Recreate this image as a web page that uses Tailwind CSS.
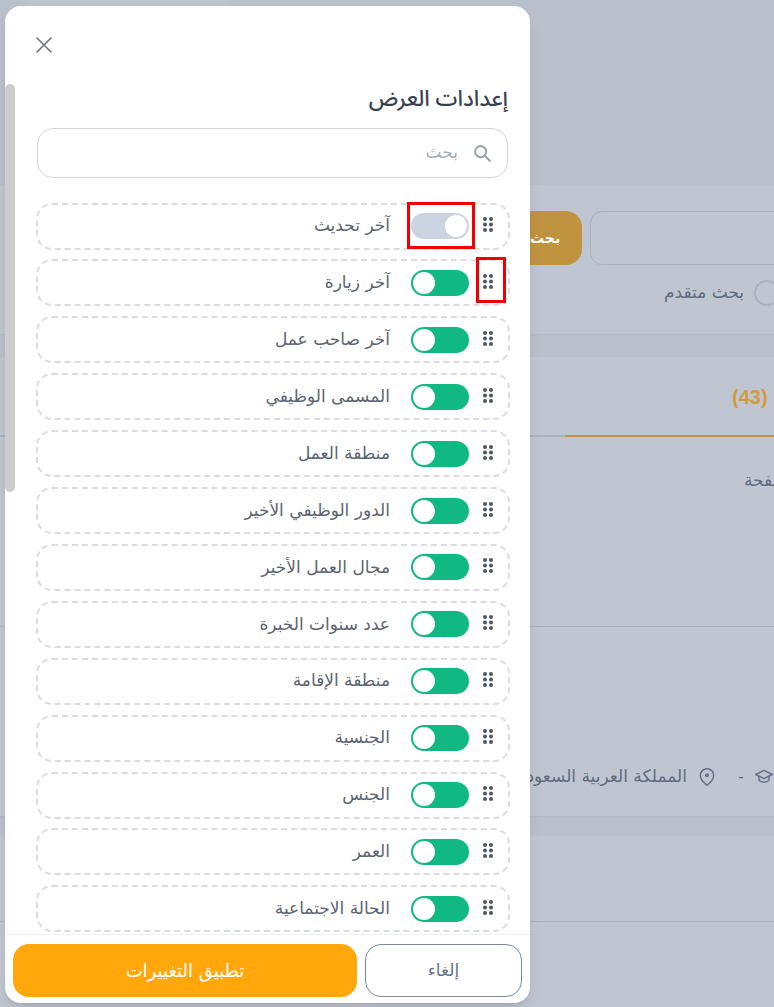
<!DOCTYPE html>
<html lang="ar">
<head>
  <meta charset="UTF-8" />
  <title>إعدادات العرض</title>
  <script src="https://cdn.jsdelivr.net/npm/@tailwindcss/browser@4"></script>
</head>
<body class="relative h-[1007px] w-[774px] overflow-hidden bg-[#b9c0cc] font-['DejaVu_Sans',sans-serif]">

  <!-- Page behind the overlay -->
  <div class="w-[1200px]">
    <div class="ml-[25px] h-[6px] w-[205px] border-l-[60px] border-[#bcc3cf] bg-[#bcc3cf]"></div>
    <section class="mt-[179px] h-[150px] border-b border-[#b3bac8] bg-[#c0c6d1] pt-[26px]">
      <div class="flex gap-2">
        <button class="ml-[482px] h-[54px] w-[100px] rounded-2xl bg-[#c09340] pl-[48px] text-left text-sm font-bold text-white">بحث</button>
        <div class="h-[54px] w-[500px] rounded-xl border border-[#aab1bf]"></div>
      </div>
      <div class="ml-[664px] mt-[15px] flex items-center gap-[10px]">
        <span class="text-[17px] text-[#5f6b80]">بحث متقدم</span>
        <span class="h-[26px] w-[26px] rounded-full border-2 border-[#aab1bf]"></span>
      </div>
    </section>
    <section class="mt-[22px] h-[183px] bg-[#c0c6d1]">
      <div class="h-[80px] border-b-2 border-[#aab1bf]">
        <div class="ml-[565px] h-[80px] w-[600px] border-b-2 border-[#c09340] pl-[167px] pt-[26px] font-['Liberation_Sans'] text-xl font-bold text-[#d09b40]">(43)</div>
      </div>
      <p class="ml-[744px] mt-[31px] text-[17px] text-[#5f6b80]">صفحة</p>
    </section>
    <section class="h-[277px] border-b border-[#b3bac8] bg-[#c0c6d1]">
      <div class="h-[87px] border-b border-[#aab1bf]"></div>
      <div class="ml-[530px] mt-[137px] flex w-[300px] items-center">
        <span dir="rtl" class="w-[157px] overflow-hidden whitespace-nowrap text-right text-[17px] text-[#5f6b80]">المملكة العربية السعودية</span>
        <svg class="ml-[10px] h-5 w-5 text-[#65718a]" viewBox="0 0 24 24" fill="none" stroke="currentColor" stroke-width="1.8" stroke-linecap="round" stroke-linejoin="round"><path d="M20 10c0 6-8 12-8 12s-8-6-8-12a8 8 0 0 1 16 0Z"/><circle cx="12" cy="10" r="1.5" fill="currentColor"/></svg>
        <span class="ml-[21px] text-[#5f6b80]">-</span>
        <svg class="ml-[10px] h-5 w-5 text-[#65718a]" viewBox="0 0 24 24" fill="none" stroke="currentColor" stroke-width="1.8" stroke-linecap="round" stroke-linejoin="round"><path d="M22 9 12 4 2 9l10 5 10-5Z"/><path d="M6 11.500V16c3 3 9 3 12 0v-4.500"/></svg>
      </div>
    </section>
    <section class="mt-[19px] h-[200px] bg-[#c0c6d1]">
      <div class="h-[86px] border-b border-[#aab1bf]"></div>
    </section>
  </div>

  <!-- Display settings dialog -->
  <div dir="rtl" class="absolute left-[5px] top-[6px] flex h-[997px] w-[525px] flex-col overflow-hidden rounded-2xl bg-white shadow-lg">
    <div class="absolute left-0 top-[78px] h-[408px] w-[10px] rounded-full bg-[#cdcdcd]"></div>

    <div class="min-h-0 flex-1 overflow-hidden pl-[32px] pr-[22px]">
      <div class="flex h-[76px] items-center justify-end pt-[1px]">
        <svg class="-ml-[5px] h-6 w-6 text-[#6b7280]" viewBox="0 0 24 24" fill="none" stroke="currentColor" stroke-width="1.6" stroke-linecap="round"><path d="M5 5l14 14M19 5L5 19"/></svg>
      </div>
      <h2 class="font-['Noto_Sans','Noto_Sans_Arabic',sans-serif] text-[22px] font-medium leading-[30px] text-[#374151]">إعدادات العرض</h2>
      <div class="mt-[16px] flex h-[50px] items-center gap-[13px] rounded-2xl border border-[#d1d5db] px-[14px]">
        <svg class="h-[22px] w-[22px] text-[#9ca3af]" viewBox="0 0 24 24" fill="none" stroke="currentColor" stroke-width="2.200" stroke-linecap="round"><circle cx="10.500" cy="10.500" r="6"/><path d="m15 15 5.500 5.500"/></svg>
        <span class="text-[17px] text-[#a4adbb]">بحث</span>
      </div>

      <ul id="columnList" class="-ml-px -mr-[2px] mt-[24.6px] flex flex-col gap-[9.9px]"></ul>
    </div>

    <div class="flex h-[69px] gap-2 border-t border-[#eeeff2] px-2 pt-[9px]">
      <button class="h-[53px] w-[157px] rounded-2xl border border-[#7b8aa0] text-[17px] text-[#64748b]">إلغاء</button>
      <button class="h-[53px] w-[344px] rounded-2xl bg-[#ffa70b] text-lg text-white">تطبيق التغييرات</button>
    </div>
  </div>

  <!-- Red annotation boxes -->
  <div class="absolute left-[407px] top-[202px] h-[47px] w-[68px] border-[3px] border-[#f00000]"></div>
  <div class="absolute left-[476px] top-[257px] h-[46px] w-[30px] border-[3px] border-[#f00000]"></div>

  <script>
    const columns = ['آخر تحديث', 'آخر زيارة', 'آخر صاحب عمل', 'المسمى الوظيفي', 'منطقة العمل', 'الدور الوظيفي الأخير', 'مجال العمل الأخير', 'عدد سنوات الخبرة', 'منطقة الإقامة', 'الجنسية', 'الجنس', 'العمر', 'الحالة الاجتماعية'];
    const list = document.getElementById('columnList');
    columns.forEach((name, i) => {
      // Only the first column is switched off in the reference
      const track = i === 0 ? 'justify-end bg-[#cbd5e1]' : 'justify-start bg-[#10b981]';
      const li = document.createElement('li');
      li.className = 'flex h-[47px] items-center rounded-2xl border-2 border-dashed border-[#d9dce2] pr-[15px]';
      li.innerHTML = `
        <svg class="mb-[3px] h-[15px] w-[10px] text-[#4b5563]" viewBox="0 0 10 15" fill="currentColor"><circle cx="2" cy="2" r="2"/><circle cx="8" cy="2" r="2"/><circle cx="2" cy="7.500" r="2"/><circle cx="8" cy="7.500" r="2"/><circle cx="2" cy="13" r="2"/><circle cx="8" cy="13" r="2"/></svg>
        <span dir="ltr" class="mr-[14px] flex h-[26px] w-[58px] items-center rounded-full px-[2px] ${track}"><span class="h-[22px] w-[22px] rounded-full bg-white"></span></span>
        <span class="mr-[21px] text-[17px] text-[#5b6472]">${name}</span>
      `;
      list.appendChild(li);
    });
  </script>
</body>
</html>
